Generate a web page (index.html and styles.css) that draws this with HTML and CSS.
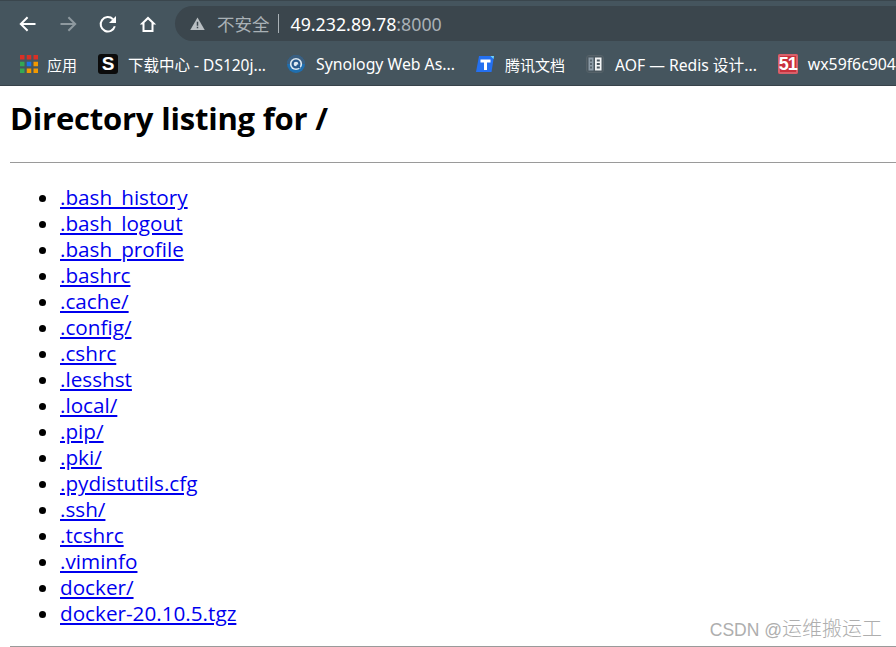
FILE: index.html
```html
<!DOCTYPE html>
<html lang="zh">
<head>
<meta charset="utf-8">
<title>Directory listing for /</title>
<link rel="stylesheet" href="styles.css">
</head>
<body>
<header class="chrome">
  <div class="toolbar">
    <nav class="navs">
      <svg class="nav" viewBox="0 0 20 20"><path d="M17.500 10H3.600M9.600 3.200 2.800 10l6.800 6.800" fill="none" stroke="#fff" stroke-width="2"/></svg>
      <svg class="nav" viewBox="0 0 20 20"><path d="M2.500 10h13.900M10.400 3.200l6.800 6.800-6.800 6.800" fill="none" stroke="#8e999f" stroke-width="2"/></svg>
      <svg class="nav" viewBox="0 0 20 20"><path d="M16.800 12.200A7.200 7.200 0 1 1 15 5.200" fill="none" stroke="#fff" stroke-width="2"/><path d="M18 2v7h-7z" fill="#fff"/></svg>
      <svg class="nav" viewBox="0 0 20 20"><path d="M10 2.500 1.800 10.500H4.500V18h11v-7.500h2.700zM10 5.400l3.500 3.400V16h-7V8.800z" fill="#fff" fill-rule="evenodd"/></svg>
    </nav>
    <div class="omnibox">
      <svg class="warn" viewBox="0 0 16 14"><path d="M8 0.500 15.800 14H.2z" fill="#b9bfc3"/><path d="M7.200 5h1.600v4.500H7.200zM7.200 10.500h1.600V12H7.200z" fill="#3b464d"/></svg>
      <span class="insecure">不安全</span>
      <span class="sep"></span>
      <span class="url">49.232.89.78<span class="port">:8000</span></span>
    </div>
  </div>
  <div class="bookmarks">
    <a class="mark mark-tight">
      <svg class="fav" viewBox="0 0 16 16">
        <path d="M0 0h4v4H0z" fill="#d93025"/><path d="M6 0h4v4H6z" fill="#d93025"/><path d="M12 0h4v4h-4z" fill="#d93025"/>
        <path d="M0 6h4v4H0z" fill="#34a853"/><path d="M6 6h4v4H6z" fill="#1a73e8"/><path d="M12 6h4v4h-4z" fill="#f29900"/>
        <path d="M0 12h4v4H0z" fill="#34a853"/><path d="M6 12h4v4H6z" fill="#f29900"/><path d="M12 12h4v4h-4z" fill="#f29900"/>
      </svg>
      <span class="cjk">应用</span>
    </a>
    <a class="mark">
      <span class="fav-s">S</span>
      <span class="ds-label">下载中心 - DS120j...</span>
    </a>
    <a class="mark mark-wide">
      <svg class="fav" viewBox="0 0 20 20"><circle cx="10" cy="10" r="10" fill="#1f6fb0"/><path d="M0 10a10 10 0 0 1 20 0z" fill="#3c5f80"/><circle cx="10" cy="10" r="6.800" fill="#dfeaf2"/><circle cx="10" cy="10" r="3.800" fill="none" stroke="#27598c" stroke-width="2.400"/><path d="M11 11l3.500 3.500" stroke="#27598c" stroke-width="2"/></svg>
      <span>Synology Web As...</span>
    </a>
    <a class="mark mark-wide">
      <svg class="fav" viewBox="0 0 18 16"><path d="M3 0h15l-2.500 16H0z" fill="#2470f0"/><path d="M4.500 3.500h10v3h-3.500V14H8V6.500H4.500z" fill="#fff"/><path d="M14.500 0H18l-.5 3z" fill="#6fd3f7"/></svg>
      <span class="cjk">腾讯文档</span>
    </a>
    <a class="mark mark-wide">
      <svg class="fav" viewBox="0 0 18 18"><rect x=".5" y=".5" width="17" height="17" rx="2.500" fill="#4b5860" stroke="#566269"/><path d="M2.500 2.500h5v13h-5z" fill="#8c9ba6"/><path d="M9 2.500h6.500v13H9z" fill="#f2f4f5"/><path d="M10.800 4.500h3v2h-3zM10.800 8h3v2h-3zM10.800 11.500h3v2h-3z" fill="#4b5860"/><path d="M4.200 4.500h1.600v2H4.200zM4.200 8h1.600v2H4.200zM4.200 11.500h1.600v2H4.200z" fill="#4b5860"/></svg>
      <span class="aof-label">AOF — Redis 设计...</span>
    </a>
    <a class="mark">
      <span class="fav-51">51</span>
      <span>wx59f6c90451</span>
    </a>
  </div>
</header>
<main class="page">
  <h1 class="title">Directory listing for /</h1>
  <hr class="rule">
  <ul class="files">
    <li><a href="#">.bash_history</a></li>
    <li><a href="#">.bash_logout</a></li>
    <li><a href="#">.bash_profile</a></li>
    <li><a href="#">.bashrc</a></li>
    <li><a href="#">.cache/</a></li>
    <li><a href="#">.config/</a></li>
    <li><a href="#">.cshrc</a></li>
    <li><a href="#">.lesshst</a></li>
    <li><a href="#">.local/</a></li>
    <li><a href="#">.pip/</a></li>
    <li><a href="#">.pki/</a></li>
    <li><a href="#">.pydistutils.cfg</a></li>
    <li><a href="#">.ssh/</a></li>
    <li><a href="#">.tcshrc</a></li>
    <li><a href="#">.viminfo</a></li>
    <li><a href="#">docker/</a></li>
    <li><a href="#">docker-20.10.5.tgz</a></li>
  </ul>
  <hr class="rule">
</main>
<div class="watermark"><span class="wm-latin">CSDN @</span>运维搬运工</div>
</body>
</html>
```
FILE: styles.css
```css
html, body {
  margin: 0;
  height: 647px;
  overflow: hidden;
  background: #fff;
}
body {
  position: relative;
  font-family: "Open Sans", "Noto Sans CJK SC", sans-serif;
}
.chrome {
  height: 86px;
  background: #45555e;
  border-top: 1px solid #3a464d;
  border-bottom: 1px solid #38434a;
  box-sizing: border-box;
  display: flex;
  flex-direction: column;
  font-family: "Noto Sans", "Noto Sans CJK SC", sans-serif;
}
.toolbar {
  height: 45px;
  flex: none;
  display: flex;
  align-items: center;
}
.navs {
  display: flex;
  gap: 20px;
  padding-left: 18px;
  width: 157px;
  box-sizing: border-box;
}
.nav {
  width: 20px;
  height: 20px;
  flex: none;
}
.omnibox {
  flex: 1;
  height: 35px;
  margin-left: 18px;
  background: #3b464d;
  border-radius: 18px 0 0 18px;
  display: flex;
  align-items: center;
  padding-left: 15px;
}
.warn {
  width: 15px;
  height: 13px;
  flex: none;
}
.insecure {
  margin-left: 12px;
  font-size: 17.500px;
  color: #a9b1b6;
}
.sep {
  width: 1px;
  height: 19px;
  margin: 0 12px 0 8px;
  background: #a9b1b6;
}
.url {
  font-size: 17.800px;
  color: #fff;
}
.port {
  color: #a9b1b6;
}
.bookmarks {
  flex: 1;
  display: flex;
  align-items: center;
  gap: 21px;
  padding: 0 0 3px 20px;
  white-space: nowrap;
  overflow: hidden;
  font-size: 15.800px;
  color: #fff;
}
.mark {
  display: flex;
  align-items: center;
  gap: 10px;
  flex: none;
}
.mark-tight {
  gap: 9px;
}
.mark-wide {
  gap: 11px;
}
.cjk {
  font-size: 15px;
}
.ds-label {
  font-size: 15.500px;
}
.aof-label {
  font-size: 15.700px;
}
.fav {
  width: 18px;
  height: 18px;
  flex: none;
}
.fav-s {
  width: 20px;
  height: 20px;
  border-radius: 3px;
  background: #0b0b0b;
  color: #fff;
  font: bold 19px/20px "Liberation Sans", sans-serif;
  text-align: center;
  flex: none;
}
.fav-51 {
  width: 20px;
  height: 20px;
  border-radius: 2px;
  background: #c9303c;
  box-shadow: inset 0 0 0 2px #d8606a;
  color: #fff;
  font: bold 18px/20px "Liberation Sans", sans-serif;
  letter-spacing: -1px;
  text-align: center;
  flex: none;
}
.page {
  padding: 0 0 0 10px;
  color: #000;
}
.title {
  margin: 14px 0 26px;
  font-size: 31px;
  line-height: 36px;
  font-weight: 700;
  letter-spacing: -0.200px;
}
.rule {
  margin: 0;
  border: 0;
  border-top: 1px solid #9a9a9a;
  height: 0;
}
.files {
  margin: 21px 0 20px;
  padding: 0 0 0 50px;
  font-size: 20.700px;
  line-height: 26px;
}
.files a {
  color: #0000ee;
}
.watermark {
  position: absolute;
  right: 14px;
  top: 617px;
  font-size: 20px;
  line-height: 22px;
  color: #aeaeae;
  font-family: "Noto Sans CJK SC", sans-serif;
  font-weight: 300;
}
.wm-latin {
  font-family: "Liberation Sans", sans-serif;
  font-size: 17.500px;
  font-weight: 400;
}
```
